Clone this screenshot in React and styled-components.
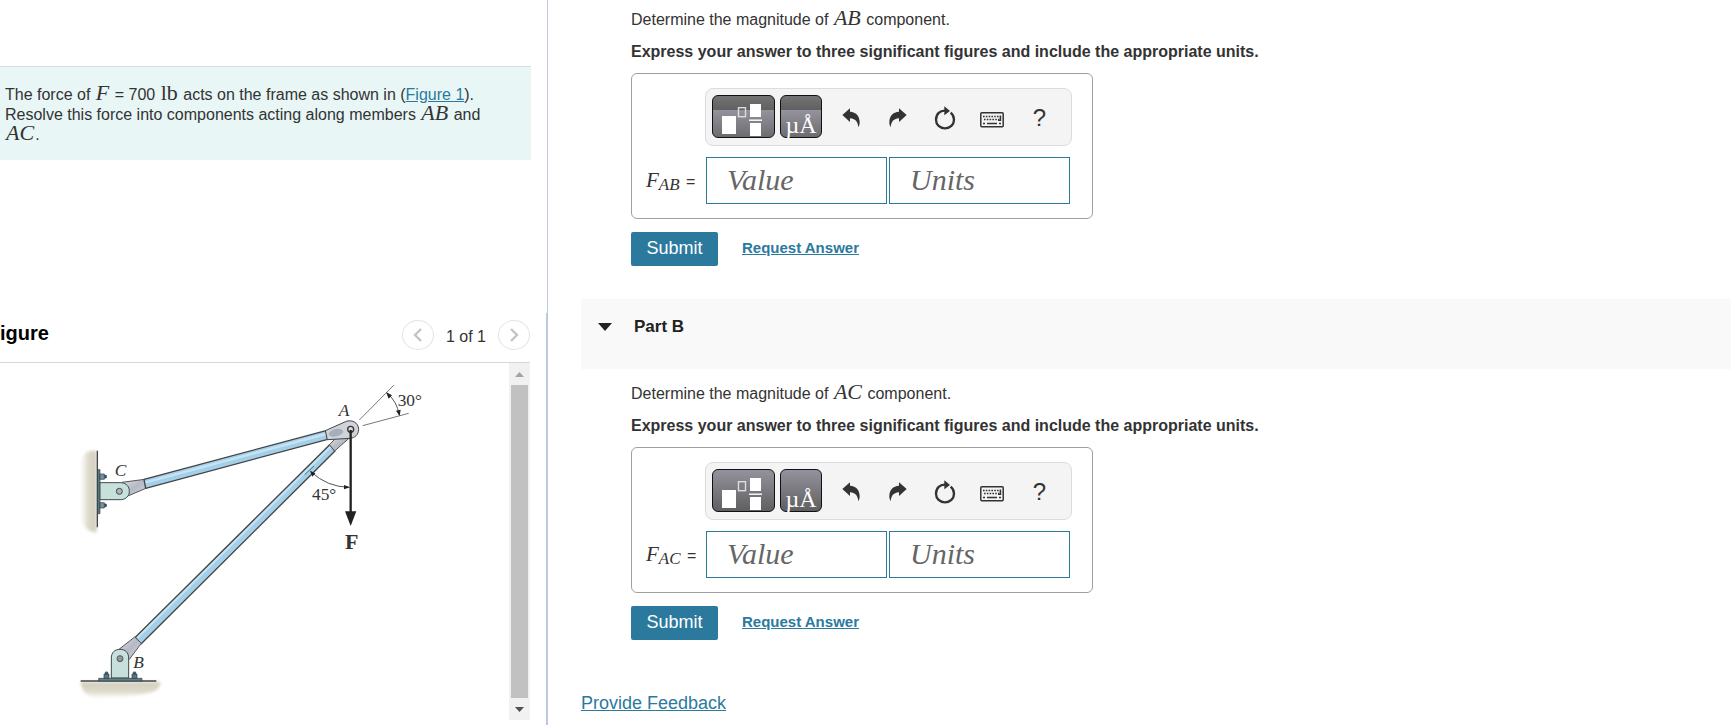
import React from "react";
import styled, { createGlobalStyle } from "styled-components";

const sans = `"Liberation Sans", Arial, sans-serif`;
const serif = `"Liberation Serif", "Times New Roman", serif`;

function UndoIcon({ flipped }) {
  return (
    <svg width="18" height="20" viewBox="0 0 54 60" aria-hidden="true">
      <path
        transform={flipped ? "translate(54 0) scale(-1 1)" : undefined}
        d="M1 21 L24 1 V11 C42 12 53 24 53 42 C53 48 52 53 49 58 C48 44 42 32 24 31 V42 Z"
        fill="#333"
      />
    </svg>
  );
}

function ResetIcon() {
  return (
    <svg width="22" height="24" viewBox="0 0 66 72" aria-hidden="true">
      <path
        d="M35 14 C18 12 6 25 6 41 C6 56 18 67 33 67 C48 67 60 56 60 41 C60 32 56 25 50 20"
        fill="none"
        stroke="#333"
        strokeWidth="7"
      />
      <path d="M31 1 L48 15 L31 28 Z" fill="#333" />
    </svg>
  );
}

function KeyboardIcon() {
  return (
    <svg width="24" height="20" viewBox="0 0 24 20" aria-hidden="true">
      <rect x="0.8" y="4.8" width="22.4" height="14" rx="1" fill="none" stroke="#333" strokeWidth="1.5" />
      <path d="M3 8.5 H19 M4 11.5 H19" stroke="#333" strokeWidth="1.6" strokeDasharray="1.6 1.2" />
      <path d="M20.4 7.5 V12.3 H18 M3 15.5 H5 M7 15.5 H17 M19 15.5 H21" fill="none" stroke="#333" strokeWidth="1.6" />
    </svg>
  );
}

function TemplatesIcon() {
  return (
    <svg width="40" height="33" viewBox="0 0 40 33" aria-hidden="true">
      <rect x="0" y="12" width="14" height="18" fill="#fff" />
      <rect x="16.5" y="3.7" width="7" height="9" fill="none" stroke="#ddd" strokeWidth="1.4" />
      <rect x="28" y="0" width="11" height="13" fill="#fff" />
      <rect x="27" y="15.5" width="13" height="1.4" fill="#fff" />
      <rect x="28" y="19" width="11" height="13" fill="#fff" />
    </svg>
  );
}

function Toolbar({ glossy }) {
  return (
    <ToolbarBar role="toolbar">
      <DarkButton $wide $glossy={glossy} aria-label="Templates">
        <TemplatesIcon />
      </DarkButton>
      <DarkButton $glossy={glossy}>µÅ</DarkButton>
      <ToolGroup>
        <ToolButton aria-label="Undo">
          <UndoIcon />
        </ToolButton>
        <ToolButton aria-label="Redo">
          <UndoIcon flipped />
        </ToolButton>
        <ToolButton aria-label="Reset">
          <ResetIcon />
        </ToolButton>
        <ToolButton aria-label="Keyboard shortcuts">
          <KeyboardIcon />
        </ToolButton>
        <ToolButton>?</ToolButton>
      </ToolGroup>
    </ToolbarBar>
  );
}

function Question({ member, glossy }) {
  return (
    <QuestionWrapper>
      <Prompt>
        Determine the magnitude of <MathItalic>{member}</MathItalic> component.
      </Prompt>
      <Instructions>
        Express your answer to three significant figures and include the
        appropriate units.
      </Instructions>
      <AnswerBox>
        <Toolbar glossy={glossy} />
        <AnswerLabel htmlFor={`value-${member}`}>
          <Variable>
            F<sub>{member}</sub>
          </Variable>{" "}
          =
        </AnswerLabel>
        <AnswerFields>
          <AnswerInput id={`value-${member}`} placeholder="Value" />
          <AnswerInput aria-label="Units" placeholder="Units" />
        </AnswerFields>
      </AnswerBox>
      <Actions>
        <SubmitButton>Submit</SubmitButton>
        <RequestLink href="#request">Request Answer</RequestLink>
      </Actions>
    </QuestionWrapper>
  );
}

function FrameDiagram() {
  return (
    <Diagram viewBox="0 0 509 357" preserveAspectRatio="xMinYMin meet" role="img">
      <defs>
        <linearGradient id="wall" x1="0" x2="1" y1="0" y2="0">
          <stop offset="0" stopColor="#e8e4d8" stopOpacity="0" />
          <stop offset="0.5" stopColor="#dedacb" />
          <stop offset="1" stopColor="#d3cebe" />
        </linearGradient>
        <linearGradient id="ground" x1="0" x2="0" y1="0" y2="1">
          <stop offset="0" stopColor="#d3cebe" />
          <stop offset="0.6" stopColor="#dedacb" />
          <stop offset="1" stopColor="#e8e4d8" stopOpacity="0" />
        </linearGradient>
        <linearGradient id="steel" x1="0" x2="1" y1="0" y2="1">
          <stop offset="0" stopColor="#dadde4" />
          <stop offset="0.5" stopColor="#b4b9c4" />
          <stop offset="1" stopColor="#d3d6dd" />
        </linearGradient>
        <filter id="soft">
          <feGaussianBlur stdDeviation="4" />
        </filter>
      </defs>
      <g transform="translate(60 7) scale(0.33333)" strokeLinejoin="round">
        {/* supports */}
        <path d="M110 244 C76 236 58 262 62 300 C56 340 64 390 60 430 C64 470 84 486 110 488 Z" fill="url(#wall)" filter="url(#soft)" />
        <path d="M112 242 V472" stroke="#444" strokeWidth="4" />
        <path d="M62 935 H300 C306 952 286 966 262 970 C220 982 170 980 110 986 C80 980 62 958 62 935 Z" fill="url(#ground)" filter="url(#soft)" />
        <path d="M62 933 H289" stroke="#444" strokeWidth="4" />
        <rect x="113" y="299" width="7" height="132" fill="#5f8088" stroke="#2c3d42" strokeWidth="2" />
        <path d="M120 312 H133 V328 H120 Z M120 398 H133 V414 H120 Z" fill="#7592a0" stroke="#2c3d42" strokeWidth="2" />
        <path d="M133 316 H139 V324 H133 M133 402 H139 V410 H133" fill="#34505e" stroke="#2c3d42" strokeWidth="2" />

        {/* member AC */}
        <path d="M186 337 L254 328 L260 354 L206 377 Z" fill="url(#steel)" stroke="#555" strokeWidth="3" />
        <path d="M252 328 L798 182 L803 208 L257 355 Z" fill="#a3cfe8" stroke="#444" strokeWidth="4" />
        <path d="M257 337 L798 192" stroke="#c6e3f3" strokeWidth="7" />
        <path d="M120 338 H184 C200 340 208 350 208 364 C208 378 199 387 184 389 H120 Z" fill="#c8e0dc" stroke="#3c4a4a" strokeWidth="3" />
        <circle cx="178" cy="364" r="9" fill="#aab6b8" stroke="#444" strokeWidth="3" />

        {/* member AB */}
        <path d="M226 802 L809 224 L825 243 L243 822 Z" fill="#a3cfe8" stroke="#444" strokeWidth="4" />
        <path d="M232 804 L812 230" stroke="#c6e3f3" strokeWidth="6" />
        <path d="M177 838 L224 801 L244 820 L208 868 Z" fill="url(#steel)" stroke="#555" strokeWidth="3" />
        <path d="M154 924 V864 C154 848 164 838 180 838 C196 838 206 848 206 864 V924 Z" fill="#c8e0dc" stroke="#3c4a4a" strokeWidth="3" />
        <circle cx="180" cy="866" r="9" fill="#8d999c" stroke="#555" strokeWidth="3" />
        <path d="M116 925 H246 V933 H116 Z" fill="#5f8088" stroke="#2c3d42" strokeWidth="2" />
        <path d="M132 912 H147 V925 H132 Z M216 912 H231 V925 H216 Z M136 906 H143 V912 H136 Z M220 906 H227 V912 H220 Z" fill="#56798a" stroke="#2c3d42" strokeWidth="2" />

        {/* joint A */}
        <path d="M808 224 L826 206 L868 204 L824 243 Z" fill="url(#steel)" stroke="#555" strokeWidth="3" />
        <path d="M796 182 L852 157 C874 145 896 158 896 178 C896 194 884 204 870 205 L802 209 Z" fill="#d0d3da" stroke="#444" strokeWidth="3" />
        <ellipse cx="828" cy="188" rx="22" ry="11" transform="rotate(-14 828 188)" fill="#a5afba" />
        <circle cx="872" cy="178" r="9" fill="#d8dadf" stroke="#333" strokeWidth="4" />

        {/* force and angle marks */}
        <path d="M872 180 V430" stroke="#222" strokeWidth="7" />
        <path d="M855 424 H889 L872 468 Z" fill="#222" />
        <path d="M898 150 L1001 46 M908 167 L1046 130" stroke="#777" strokeWidth="3" />
        <path d="M982 70 Q1012 96 1017 134 M754 306 Q800 350 866 352" fill="none" stroke="#555" strokeWidth="3" />
        <path d="M978 66 L996 76 L986 86 Z M1019 138 L1008 122 L1022 119 Z M750 302 L766 310 L757 320 Z M870 352 L852 345 V358 Z" fill="#222" />
        <path d="M734 314 L762 288" stroke="#4c6f86" strokeWidth="3" />

        <DiagramLabel x="836" y="137">A</DiagramLabel>
        <DiagramLabel x="164" y="318">C</DiagramLabel>
        <DiagramLabel x="220" y="893">B</DiagramLabel>
        <DiagramLabel x="1013" y="108" $plain>30°</DiagramLabel>
        <DiagramLabel x="756" y="391" $plain>45°</DiagramLabel>
        <DiagramLabel x="855" y="536" $plain $bold>F</DiagramLabel>
      </g>
    </Diagram>
  );
}

function App() {
  return (
    <Page>
      <GlobalStyle />
      <Sidebar>
        <ProblemPanel>
          <ProblemText>
            The force of <MathItalic>F</MathItalic> = 700{" "}
            <MathUnit>lb</MathUnit> acts on the frame as shown in (
            <a href="#figure">Figure 1</a>). Resolve this force into components
            acting along members <MathItalic>AB</MathItalic> and{" "}
            <MathItalic>AC</MathItalic>.
          </ProblemText>
        </ProblemPanel>
        <FigurePanel id="figure">
          <FigureHeader>
            <FigureTitle>igure</FigureTitle>
            <Pager>
              <PagerButton aria-label="Previous figure">
                <svg width="10" height="16" viewBox="0 0 10 16">
                  <path d="M8 2 L2 8 L8 14" fill="none" stroke="#c4c4c4" strokeWidth="2.4" />
                </svg>
              </PagerButton>
              <PagerText>1 of 1</PagerText>
              <PagerButton aria-label="Next figure">
                <svg width="10" height="16" viewBox="0 0 10 16">
                  <path d="M2 2 L8 8 L2 14" fill="none" stroke="#c4c4c4" strokeWidth="2.4" />
                </svg>
              </PagerButton>
            </Pager>
          </FigureHeader>
          <FigureBody>
            <FrameDiagram />
            <ScrollTrack>
              <ScrollArrow aria-label="Scroll up">
                <svg width="9" height="5" viewBox="0 0 9 5">
                  <path d="M0 5 L4.5 0 L9 5 Z" fill="#a3a3a3" />
                </svg>
              </ScrollArrow>
              <ScrollThumb />
              <ScrollArrow aria-label="Scroll down">
                <svg width="9" height="5" viewBox="0 0 9 5">
                  <path d="M0 0 L4.5 5 L9 0 Z" fill="#505050" />
                </svg>
              </ScrollArrow>
            </ScrollTrack>
          </FigureBody>
        </FigurePanel>
      </Sidebar>
      <Main>
        <Question member="AB" glossy />
        <PartHeader>
          <svg width="14" height="8" viewBox="0 0 14 8" aria-hidden="true">
            <path d="M0 0 H14 L7 8 Z" fill="#222" />
          </svg>
          Part B
        </PartHeader>
        <Question member="AC" />
        <FeedbackLink href="#feedback">Provide Feedback</FeedbackLink>
      </Main>
    </Page>
  );
}

const GlobalStyle = createGlobalStyle`
  * {
    box-sizing: border-box;
  }
  body {
    margin: 0;
    background: #fff;
    color: #333;
    font: 16px/20px ${sans};
  }
  a {
    color: #2b7a9e;
  }
  button {
    padding: 0;
    border: 0;
    background: none;
    cursor: pointer;
  }
  svg {
    display: block;
  }
`;

const Page = styled.div`
  display: flex;
  min-height: 100vh;
`;

const Sidebar = styled.aside`
  display: flex;
  flex-direction: column;
  flex: 0 0 548px;
`;

const ProblemPanel = styled.section`
  padding: 66px 16px 153px 0;
  border-right: 1px solid #c3c9d6;
`;

const ProblemText = styled.p`
  margin: 0;
  padding: 18px 36px 15px 5px;
  border-top: 1px solid #d9dede;
  background: #e8f6f6;
`;

const MathUnit = styled.span`
  margin: 0 1px;
  font-family: ${serif};
  font-size: 22px;
  line-height: 0;
`;

const MathItalic = styled(MathUnit)`
  font-style: italic;
`;

const FigurePanel = styled.section`
  display: flex;
  flex: 1;
  flex-direction: column;
  padding: 0 16px 5px 0;
  border-right: 2px solid #b9cbdf;
`;

const FigureHeader = styled.div`
  display: flex;
  justify-content: space-between;
  padding: 5px 0 10px;
  border-bottom: 1px solid #d6d6d6;
`;

const FigureTitle = styled.h2`
  margin: 0;
  color: #000;
  font-size: 20px;
  line-height: 30px;
`;

const Pager = styled.div`
  display: flex;
  align-items: center;
  gap: 12px;
  height: 34px;
`;

const PagerText = styled.span`
  padding-top: 4px;
`;

const PagerButton = styled.button`
  display: grid;
  place-items: center;
  width: 32px;
  height: 30px;
  border: 1px solid #e3e3e3;
  border-radius: 50%;
`;

const FigureBody = styled.div`
  display: flex;
  flex: 1;
`;

const Diagram = styled.svg`
  flex: 1;
  min-width: 0;
`;

const DiagramLabel = styled.text`
  fill: #333;
  font-family: ${serif};
  font-size: ${(props) => (props.$bold ? "66px" : "52px")};
  font-style: ${(props) => (props.$plain ? "normal" : "italic")};
  font-weight: ${(props) => (props.$bold ? 700 : 400)};
`;

const ScrollTrack = styled.div`
  display: flex;
  flex-direction: column;
  width: 21px;
  background: #f1f1f1;
`;

const ScrollArrow = styled.button`
  display: grid;
  place-items: center;
  height: 22px;
`;

const ScrollThumb = styled.div`
  flex: 1;
  margin: 0 2px;
  background: #c1c1c1;
`;

const Main = styled.main`
  flex: 1;
  min-width: 0;
  padding: 10px 0 0 33px;
`;

const QuestionWrapper = styled.section`
  padding: 0 50px;
`;

const Prompt = styled.p`
  margin: 0 0 12px;
`;

const Instructions = styled.p`
  margin: 0 0 11px;
  font-weight: 700;
`;

const AnswerBox = styled.div`
  display: grid;
  grid-template-columns: 59px minmax(0, 1fr);
  row-gap: 11px;
  align-items: center;
  max-width: 462px;
  padding: 14px 20px 14px 14px;
  border: 1px solid #a0a0a0;
  border-radius: 6px;
`;

const ToolbarBar = styled.div`
  display: flex;
  grid-column: 2;
  gap: 5px;
  padding: 6px 6px 7px;
  border: 1px solid #dcdcdc;
  border-radius: 8px;
  background: #f4f4f4;
`;

const DarkButton = styled.button`
  display: flex;
  align-items: flex-end;
  justify-content: ${(props) => (props.$wide ? "flex-start" : "center")};
  width: ${(props) => (props.$wide ? "63px" : "42px")};
  height: 43px;
  padding-left: ${(props) => (props.$wide ? "9px" : "0")};
  border: 1px solid #111;
  border-radius: 6px;
  background: ${(props) =>
    props.$glossy
      ? "linear-gradient(#747474, #606060 34%, #94939d 35%, #6c6c70)"
      : "linear-gradient(#94939d, #5f5f61)"};
  color: #fff;
  font: 24px/24px ${serif};
`;

const ToolGroup = styled.div`
  display: flex;
  flex: 1;
  justify-content: space-around;
  align-items: center;
  padding: 2px 2px 0 0;
`;

const ToolButton = styled.button`
  display: grid;
  place-items: center;
  width: 30px;
  height: 40px;
  color: #333;
  font: 24px/30px ${sans};
`;

const AnswerLabel = styled.label`
  white-space: nowrap;
`;

const Variable = styled.i`
  margin-right: 2px;
  font-family: ${serif};
  font-size: 21px;

  sub {
    font-size: 17px;
    line-height: 0;
    vertical-align: -3px;
  }
`;

const AnswerFields = styled.div`
  display: flex;
  gap: 2px;
  padding: 0 2px 0 1px;
`;

const AnswerInput = styled.input`
  flex: 1;
  min-width: 0;
  height: 47px;
  padding: 0 20px 2px;
  border: 1px solid #2b7a9e;
  font: italic 30px ${serif};

  &::placeholder {
    color: #666;
    opacity: 1;
  }
`;

const Actions = styled.div`
  display: flex;
  align-items: center;
  gap: 24px;
  margin-top: 13px;
`;

const SubmitButton = styled.button`
  width: 87px;
  height: 34px;
  padding-bottom: 2px;
  border-radius: 2px;
  background: #2b7a9e;
  color: #fff;
  font: 18px ${sans};
`;

const RequestLink = styled.a`
  padding-bottom: 2px;
  font-size: 15px;
  font-weight: 700;
`;

const PartHeader = styled.h2`
  display: flex;
  gap: 22px;
  align-items: center;
  margin: 33px 0 15px;
  padding: 18px 17px 32px;
  background: #f9f9f9;
  color: #222;
  font-size: 17px;
  line-height: 20px;
`;

const FeedbackLink = styled.a`
  display: inline-block;
  margin-top: 53px;
  font-size: 18px;
`;

export default App;
